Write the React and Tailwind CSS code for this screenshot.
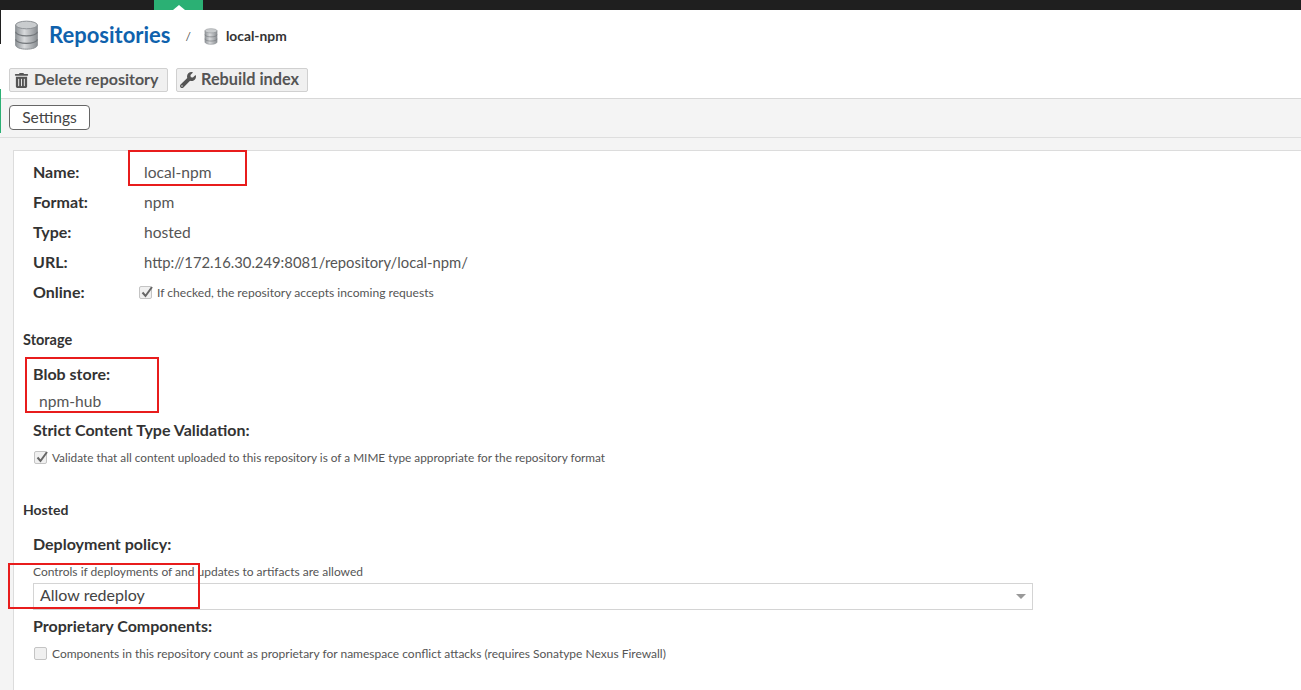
import React from "react";
import { FaTrashAlt, FaWrench } from "react-icons/fa";

const Db = ({ s }) => (
  <svg width={s} height={s * 1.2} viewBox="0 0 30 36">
    <defs>
      <linearGradient id="g" x1="0" x2="1" y1="0" y2="0">
        <stop offset="0" stopColor="#8f9498" />
        <stop offset="0.4" stopColor="#d8dadc" />
        <stop offset="1" stopColor="#8a8e92" />
      </linearGradient>
    </defs>
    <path d="M2 6v24c0 3 6 5 13 5s13-2 13-5V6z" fill="url(#g)" stroke="#8d9195" strokeWidth="1.2" />
    <ellipse cx="15" cy="6" rx="13" ry="4.6" fill="#c9ccce" stroke="#8d9195" strokeWidth="1.2" />
    <path d="M2 14c0 3 6 5 13 5s13-2 13-5M2 23c0 3 6 5 13 5s13-2 13-5" fill="none" stroke="#73777b" strokeWidth="1.4" />
  </svg>
);

const Check = ({ on }) => (
  <span className="relative inline-block w-[13px] h-[13px] shrink-0 rounded-[2px] border border-[#c4c4c4] bg-[#f0f0f0]">
    {on && (
      <svg className="absolute left-[0px] top-[-3px]" width="14" height="15" viewBox="0 0 14 15">
        <path d="M2.5 8.5l3 3.5L12 3" fill="none" stroke="#666" strokeWidth="2" />
      </svg>
    )}
  </span>
);

const Row = ({ label, value, url }) => (
  <div className="flex items-center h-[30px]">
    <span className="w-[111px] -mt-[2px] font-bold text-[16px] text-[#333]">{label}</span>
    <span className={(url ? "text-[14.8px] -mt-[1px]" : "text-[15.6px]") + " text-[#555]"}>{value}</span>
  </div>
);

const Hint = ({ on, children, className }) => (
  <div className={"flex items-center gap-[5px] text-[#555] " + (className || "")}>
    <Check on={on} />
    <span>{children}</span>
  </div>
);

const Red = ({ className }) => (
  <div className={"absolute border-2 border-[#e81c1c] pointer-events-none " + className} />
);

export default function App() {
  return (
    <div className="relative w-[1301px] h-[690px] overflow-hidden bg-[#f4f4f4] font-['Lato','Open_Sans',sans-serif]">
      <div className="relative h-[10px] bg-[#1f1f1f] flex">
        <div className="relative ml-[154px] w-[49px] bg-[#2bb074]">
          <div className="absolute left-[19px] bottom-0 w-0 h-0 border-x-[6px] border-x-transparent border-b-[5px] border-b-white" />
        </div>
      </div>
      <div className="absolute left-0 top-[10px] w-px h-[34px] bg-[#1f1f1f]" />
      <div className="absolute left-0 top-[89px] w-[1px] h-[44px] bg-[#2bb074]" />

      <div className="bg-white h-[89px] border-b border-[#d8d8d8] pl-[9px]">
        <div className="flex items-center h-[50px] pl-[5px]">
          <Db s={25} />
          <span className="ml-[10px] -mt-[2px] text-[22px] font-bold text-[#0f62ad]">Repositories</span>
          <span className="ml-[15px] mt-[4px] text-[12px] text-[#555]">/</span>
          <span className="ml-[13px] mt-[3px]"><Db s={14} /></span>
          <span className="ml-[8px] mt-[3px] text-[13.8px] font-bold text-[#333]">local-npm</span>
        </div>
        <div className="flex gap-2 mt-[8px]">
          <div className="flex items-center h-[24px] w-[159px] pl-[4px] gap-[5px] bg-[#f0f0f0] border border-[#d0d0d0] rounded-[2px] text-[16px] font-bold text-[#555]">
            <FaTrashAlt size={15} />
            <span className="-mt-[2px]">Delete repository</span>
          </div>
          <div className="flex items-center h-[24px] w-[132px] pl-[3px] gap-[5px] bg-[#f0f0f0] border border-[#d0d0d0] rounded-[2px] text-[16.3px] font-bold text-[#555]">
            <FaWrench size={16} />
            <span className="-mt-[2px]">Rebuild index</span>
          </div>
        </div>
      </div>

      <div className="h-[39px] border-b border-[#dedede] pl-[9px] pt-[6px]">
        <div className="flex items-center justify-center w-[81px] h-[25px] bg-white border border-[#666] rounded-[4px] text-[15.6px] text-[#444]">
          Settings
        </div>
      </div>

      <div className="ml-[13px] mt-[12px] h-[560px] bg-white border-l border-t border-[#dcdcdc] pl-[19px] pt-[7px]">
        <Row label="Name:" value="local-npm" />
        <Row label="Format:" value="npm" />
        <Row label="Type:" value="hosted" />
        <Row label="URL:" url value="http://172.16.30.249:8081/repository/local-npm/" />
        <div className="flex items-center h-[30px]">
          <span className="w-[106px] -mt-[2px] font-bold text-[16px] text-[#333]">Online:</span>
          <Hint on className="text-[12.1px]">If checked, the repository accepts incoming requests</Hint>
        </div>

        <div className="-ml-[10px] mt-[21px] h-[20px] text-[14.5px] font-bold text-[#333]">Storage</div>
        <div className="mt-[13px] h-[22px] font-bold text-[16px] text-[#333]">Blob store:</div>
        <div className="mt-[6px] ml-[6px] h-[22px] text-[15.6px] text-[#555]">npm-hub</div>
        <div className="mt-[6px] h-[22px] font-bold text-[16px] text-[#333]">Strict Content Type Validation:</div>
        <Hint on className="mt-[9px] ml-[1px] text-[11.8px]">Validate that all content uploaded to this repository is of a MIME type appropriate for the repository format</Hint>

        <div className="-ml-[10px] mt-[32px] h-[20px] text-[14px] font-bold text-[#333]">Hosted</div>
        <div className="mt-[13px] h-[22px] font-bold text-[16px] text-[#333]">Deployment policy:</div>
        <div className="mt-[11px] h-[14px] leading-[14px] text-[12px] text-[#555]">Controls if deployments of and updates to artifacts are allowed</div>
        <div className="flex items-center justify-between mt-[4px] w-[1000px] h-[27px] border border-[#d4d4d4] pl-[6px] pr-[6px] text-[16px] text-[#444]">
          <span className="-mt-[2px]">Allow redeploy</span>
          <span className="w-0 h-0 border-x-[5px] border-x-transparent border-t-[5px] border-t-[#999]" />
        </div>
        <div className="mt-[4px] h-[22px] font-bold text-[16px] text-[#333]">Proprietary Components:</div>
        <Hint className="mt-[9px] ml-[1px] text-[12px]">Components in this repository count as proprietary for namespace conflict attacks (requires Sonatype Nexus Firewall)</Hint>
      </div>

      <Red className="left-[128px] top-[150px] w-[119px] h-[36px]" />
      <Red className="left-[25px] top-[357px] w-[134px] h-[56px]" />
      <Red className="left-[8px] top-[563px] w-[192px] h-[46px]" />
    </div>
  );
}
